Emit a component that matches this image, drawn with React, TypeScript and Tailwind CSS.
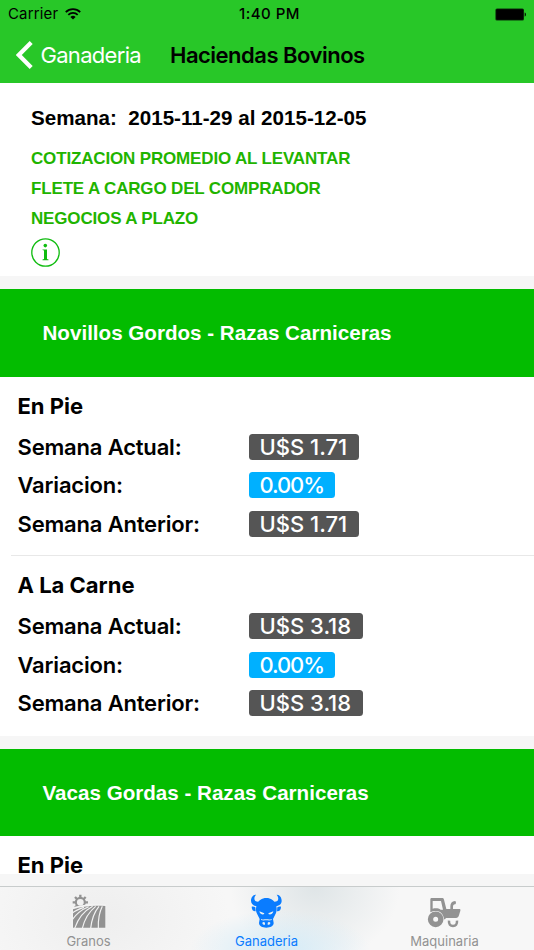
import { ReactNode } from "react";

interface QuoteRow {
  label: string;
  value: string;
  type: "price" | "variation";
}

interface Quote {
  title: string;
  rows: QuoteRow[];
}

interface Category {
  name: string;
  quotes: Quote[];
}

const notes = [
  "COTIZACION PROMEDIO AL LEVANTAR",
  "FLETE A CARGO DEL COMPRADOR",
  "NEGOCIOS A PLAZO",
];

const categories: Category[] = [
  {
    name: "Novillos Gordos - Razas Carniceras",
    quotes: [
      {
        title: "En Pie",
        rows: [
          { label: "Semana Actual:", value: "U$S 1.71", type: "price" },
          { label: "Variacion:", value: "0.00%", type: "variation" },
          { label: "Semana Anterior:", value: "U$S 1.71", type: "price" },
        ],
      },
      {
        title: "A La Carne",
        rows: [
          { label: "Semana Actual:", value: "U$S 3.18", type: "price" },
          { label: "Variacion:", value: "0.00%", type: "variation" },
          { label: "Semana Anterior:", value: "U$S 3.18", type: "price" },
        ],
      },
    ],
  },
  {
    name: "Vacas Gordas - Razas Carniceras",
    quotes: [{ title: "En Pie", rows: [] }],
  },
];

const WifiIcon = () => (
  <svg width="16" height="12" viewBox="0 0 16 12" fill="none">
    <path d="M.8 4.1a10.3 10.3 0 0 1 14.4 0" stroke="#000" strokeWidth="1.9" />
    <path d="M3.3 6.8a6.7 6.7 0 0 1 9.4 0" stroke="#000" strokeWidth="1.8" />
    <path d="M8 11.6 5.4 9a3.7 3.7 0 0 1 5.2 0Z" fill="#000" />
  </svg>
);

const BatteryIcon = () => (
  <svg width="31" height="13" viewBox="0 0 31 13">
    <rect x="0.4" y="0.5" width="28.6" height="12" rx="1.6" fill="#0a320a" />
    <rect x="1.2" y="1.2" width="27" height="10.6" rx="1" fill="#000" />
    <path d="M29.7 4.5c1.6.5 1.6 3.5 0 4Z" fill="#000" />
  </svg>
);

const FieldIcon = () => (
  <svg width="40" height="37" viewBox="60 35 120 111" className="ml-[2px]">
    {/* sun with eight short rays */}
    <g fill="none" stroke="#929292">
      <circle cx="91" cy="66" r="13.5" strokeWidth="6.5" />
      <path
        d="M91 43v9M91 80v7M68 66h9M105 66h9M75 50l6 6M107 50l-6 6M75 82l6-6M107 82l-6-6"
        strokeWidth="7"
      />
    </g>
    <path d="M64 84c30-13 66-15 105-12v72H64Z" fill="#f3f3f3" />
    <path d="M69 87c28-10 62-13 97-10v65H69Z" fill="#929292" />
    <g stroke="#f3f3f3" fill="none" strokeWidth="3.5">
      <path d="M67 98c10-8 23-13 35-17" />
      <path d="M67 118c12-18 29-31 49-39" />
      <path d="M74 144c10-29 28-52 54-66" />
      <path d="M97 144c7-29 20-50 40-66" />
      <path d="M122 144c3-27 10-48 25-66" />
      <path d="M145 144c-1-25 2-46 12-66" />
    </g>
  </svg>
);

const BullIcon = () => (
  <svg width="40" height="37" viewBox="60 35 120 111" className="mr-[2px]">
    <g fill="#0a7cff">
      <path d="M90 43c-9-1-15 9-15 18 0 10 8 16 19 17l9-15c-8 2-15 1-17-4-2-6 0-11 4-16Z" />
      <path d="M152 43c9-1 15 9 15 18 0 10-8 16-19 17l-9-15c8 2 15 1 17-4 2-6 0-11-4-16Z" />
      <path d="M77 79c4-1 8 0 11 2l1 12c-7 1-12-5-12-14Z" />
      <path d="M165 79c-4-1-8 0-11 2l-1 12c7 1 12-5 12-14Z" />
      <path d="M121 53c14 0 23 7 28 19 4 10 4 18 1 26l-9 18 2 12c0 9-10 14-22 14s-22-5-22-14l2-12-9-18c-3-8-3-16 1-26 5-12 14-19 28-19Z" />
    </g>
    <g fill="#e9eff2">
      <path d="m100 93 15 6c-1 4-4 4-7 3-4-1-7-4-8-9Z" />
      <path d="m142 93-15 6c1 4 4 4 7 3 4-1 7-4 8-9Z" />
      <path d="M105 116c6 3 10 1 16 1s10 2 16-1v3c-5 2-10 1-16 1s-11 1-16-1Z" />
      <path d="M109 127c3-3 7-2 8 1v5c-4 1-8-1-8-6Z" />
      <path d="M133 127c-3-3-7-2-8 1v5c4 1 8-1 8-6Z" />
    </g>
  </svg>
);

const TractorIcon = () => (
  <svg width="40" height="37" viewBox="60 35 120 111" className="mr-[2px]">
    <path
      fillRule="evenodd"
      d="M82 53h31c4 0 6 1 7 5l7 28h12V78c0-10 5-15 14-16 4 0 4 10 0 10-4 1-6 3-6 7v7h19c3 0 4 2 3 5l-4 14c-2 6-4 8-9 8h-27c-4 0-5 2-6 4h-3c-1-15-11-25-24-25-7 0-12 1-17 4V57c0-3 2-4 5-4Zm4 9v23c10-2 18-1 24 3h7l-6-26Z"
      fill="#929292"
    />
    <circle cx="95" cy="117" r="15.5" stroke="#929292" strokeWidth="16" fill="none" />
    <path d="M135 121c-1 11 4 16 12 16s13-5 12-16" stroke="#929292" strokeWidth="7.5" fill="none" />
  </svg>
);

const Badge = ({ type, children }: { type: QuoteRow["type"]; children: ReactNode }) => (
  <span
    className={`h-[26px] rounded-[3.5px] text-[22px] leading-[27px] font-medium text-white ${
      type === "variation"
        ? "bg-[#00b0ff] pr-[11px] pl-[10.5px] tracking-[-1.1px]"
        : "bg-[#555555] pr-[11.5px] pl-[10.5px]"
    }`}
  >
    {children}
  </span>
);

const QuoteBlock = ({ quote }: { quote: Quote }) => (
  <div className="pt-3.5 pb-[13px] pl-[17.5px]">
    <h3 className="h-[37px] text-[22px] leading-[30px] font-bold">{quote.title}</h3>
    {quote.rows.map((row) => (
      <div key={row.label} className="flex h-[38.5px] items-center">
        <span className="w-[231.5px] pt-px text-[22px] font-semibold tracking-[-0.18px]">
          {row.label}
        </span>
        <Badge type={row.type}>{row.value}</Badge>
      </div>
    ))}
  </div>
);

const Tab = ({ label, active, icon }: { label: string; active?: boolean; icon: ReactNode }) => (
  <button className="flex w-[178px] flex-col items-center pt-[5px]">
    {icon}
    <span
      className={`pt-[3px] pr-px text-[13px] leading-[18px] ${
        active ? "text-[#0a7cff]" : "text-[#929292]"
      }`}
    >
      {label}
    </span>
  </button>
);

const App = () => {
  return (
    <div className="flex h-[950px] w-[534px] flex-col overflow-hidden bg-[#f6f6f6] font-['Inter',sans-serif] whitespace-nowrap text-black">
      <header className="h-[83px] shrink-0 bg-[#28c728]">
        <div className="grid h-7 grid-cols-3 items-center px-2 text-[15px]">
          <div className="flex items-center gap-[7px]">
            <span className="tracking-[0.15px]">Carrier</span>
            <WifiIcon />
          </div>
          <span className="pl-[5px] text-center font-medium tracking-[0.5px]">1:40 PM</span>
          <div className="flex justify-end">
            <BatteryIcon />
          </div>
        </div>
        <div className="flex h-[54px] items-center pl-[16px] text-[22px]">
          <svg width="17" height="28" viewBox="0 0 17 28" fill="none">
            <path d="M15.2 1.5 2.8 14l12.4 12.5" stroke="#fff" strokeWidth="4.2" />
          </svg>
          <span className="ml-[7.5px] w-[129.5px] tracking-[-0.7px] text-white">Ganaderia</span>
          <h1 className="font-semibold tracking-[-0.5px]">Haciendas Bovinos</h1>
        </div>
      </header>

      <main className="h-[791px] shrink-0 overflow-hidden">
        <section className="h-[193px] bg-white pt-[21px] pl-[31px] font-['Liberation_Sans',sans-serif] font-bold">
          <h2 className="mb-3 text-[20.6px] leading-7 whitespace-pre">
            Semana:  2015-11-29 al 2015-12-05
          </h2>
          {notes.map((note) => (
            <p key={note} className="text-[17px] leading-[30px] tracking-[-0.16px] text-[#1fb400]">
              {note}
            </p>
          ))}
          <svg width="29" height="29" viewBox="0 0 29 29" className="mt-[4px]">
            <circle cx="14.5" cy="14.5" r="13.7" fill="none" stroke="#10bc10" strokeWidth="1.3" />
            <circle cx="14.3" cy="7.6" r="1.8" fill="#10bc10" />
            <path d="M11.5 11.4h4.5v9.6l1.5.6v.6h-6v-.6l1.5-.6v-8.4l-1.5-.5Z" fill="#10bc10" />
          </svg>
        </section>

        {categories.map((category) => (
          <section key={category.name} className="pt-[13px]">
            <h2 className="flex h-[87.5px] items-center bg-[#03bc00] pt-0.5 pl-[42.5px] font-['Liberation_Sans',sans-serif] text-[20.6px] font-bold text-white">
              {category.name}
            </h2>
            <div className="bg-white">
              {category.quotes.map((quote, index) => (
                <div key={quote.title}>
                  {index > 0 && <div className="-mt-px ml-[11px] h-px bg-[#e8e8e8]" />}
                  <QuoteBlock quote={quote} />
                </div>
              ))}
            </div>
          </section>
        ))}
      </main>

      <nav className="mt-3 flex h-16 shrink-0 border-t border-[#c8cccc] bg-[radial-gradient(ellipse_90px_40px_at_280px_100%,#d3ebf7,#d3ebf700),radial-gradient(ellipse_85px_75px_at_315px_0,#dfe5e7,#dfe5e700),radial-gradient(ellipse_130px_90px_at_100px_50%,#eeeeee,#eeeeee00),linear-gradient(#f7f7f7,#f7f7f7)]">
        <Tab label="Granos" icon={<FieldIcon />} />
        <Tab label="Ganaderia" active icon={<BullIcon />} />
        <Tab label="Maquinaria" icon={<TractorIcon />} />
      </nav>
    </div>
  );
};

export default App;
